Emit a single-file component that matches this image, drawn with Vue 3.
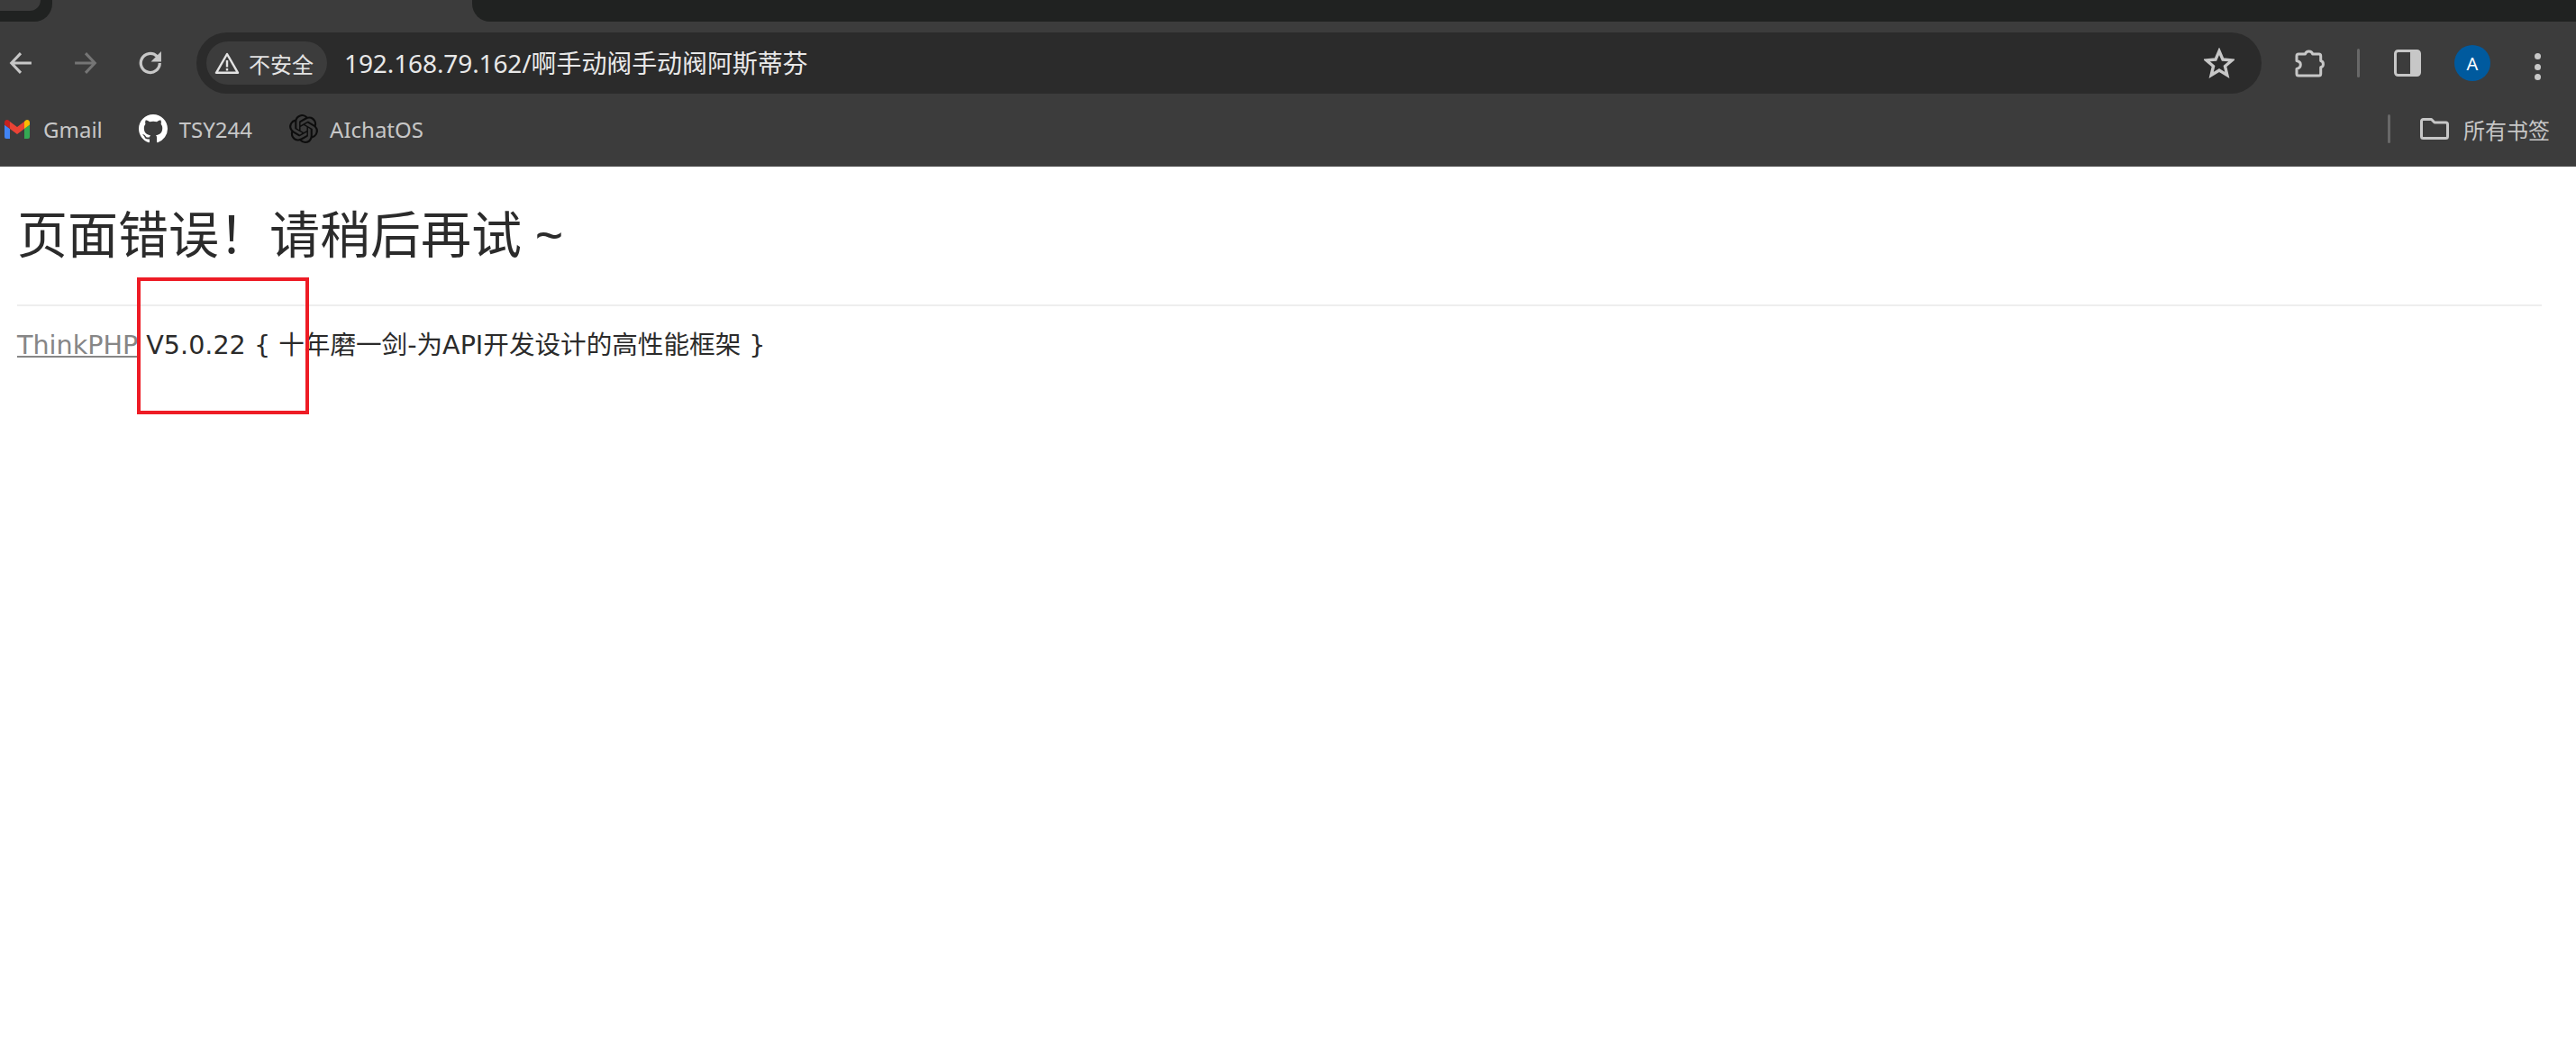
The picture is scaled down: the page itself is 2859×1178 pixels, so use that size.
<script setup>
const bookmarks = [
  { name: 'Gmail', icon: 'gmail' },
  { name: 'TSY244', icon: 'github' },
  { name: 'AIchatOS', icon: 'openai' }
]
</script>

<template>
  <div class="page">
    <header class="chrome">
      <div class="tabstrip">
        <div class="tab-left"><div class="tab-left-inner"></div></div>
        <div class="tab-active"></div>
        <div class="tab-right"></div>
      </div>
      <div class="toolbar">
        <svg class="nav first" viewBox="0 0 24 24" fill="none" stroke="#c7c7c7" stroke-width="2.8"><path d="M23 12H3M12 2 2.500 12 12 22" /></svg>
        <svg class="nav forward" viewBox="0 0 24 24" fill="none" stroke="#757575" stroke-width="2.8"><path d="M1 12h20M12 2l9.500 10L12 22" /></svg>
        <svg class="nav reload" viewBox="0 0 24 24" fill="none" stroke="#c7c7c7" stroke-width="3"><path d="M21.500 12a9.700 9.700 0 1 1-3-7L21.500 8" /><path d="M23 0v10.500h-10.500z" stroke="none" fill="#c7c7c7" /></svg>
        <div class="omnibox">
          <div class="chip">
            <svg class="warn" viewBox="0 0 28 24" fill="none" stroke="#e3e3e3" stroke-width="2.400"><path d="M14 2 2 22.800h24z" stroke-linejoin="round" /><path d="M14 9v7.500M14 18v2.500" /></svg>
            <span>不安全</span>
          </div>
          <div class="url">192.168.79.162/啊手动阀手动阀阿斯蒂芬</div>
          <svg class="star" viewBox="0 0 32 32" fill="none" stroke="#c7c7c7" stroke-width="3.200"><path d="m16 3.500 3.800 8.800 9.500.8-7.200 6.200 2.200 9.300-8.300-5-8.300 5 2.200-9.300-7.200-6.200 9.500-.8z" stroke-linejoin="miter" /></svg>
        </div>
        <svg class="puzzle" viewBox="0 0 34 34" fill="none" stroke="#c7c7c7" stroke-width="3"><path d="M4 8h7.500a4.300 4.300 0 0 1 8.200 0h7c1.200 0 2 .8 2 2v5.500a3.800 3.800 0 0 1 0 7.300V30c0 1.200-.8 2-2 2H4c-1.200 0-2-.8-2-2v-5.500c2.800-.6 4.300-2.600 4.300-4.700S4.800 16 2 15.500V10c0-1.200.8-2 2-2z" stroke-linejoin="round" /></svg>
        <i class="divider"></i>
        <svg class="panel" viewBox="0 0 30 30"><rect x="1.500" y="1.500" width="27" height="27" rx="3" fill="none" stroke="#c7c7c7" stroke-width="3" /><path d="M18 1.500h8a3 3 0 0 1 2.500 3v21a3 3 0 0 1-2.500 3h-8z" fill="#c7c7c7" /></svg>
        <div class="avatar">A</div>
        <div class="kebab"><i></i><i></i><i></i></div>
      </div>
      <div class="bookmarks">
        <div v-for="b in bookmarks" :key="b.name" class="bookmark" :class="b.icon">
          <svg v-if="b.icon === 'gmail'" class="bm-icon" viewBox="0 0 28 21">
            <path d="M2 21h4V10L0 5.500V19a2 2 0 0 0 2 2z" fill="#4285f4" />
            <path d="M22 21h4a2 2 0 0 0 2-2V5.500L22 10z" fill="#34a853" />
            <path d="M22 2v8l6-4.500V3C28 .6 25.200-.8 23.200.8z" fill="#fbbc04" />
            <path d="M6 10V2l8 6 8-6v8l-8 6z" fill="#ea4335" />
            <path d="M0 3v2.500L6 10V2L4.800.8C2.800-.8 0 .6 0 3z" fill="#c5221f" />
          </svg>
          <svg v-else-if="b.icon === 'github'" class="bm-icon" viewBox="0 0 16 16"><path fill="#fff" d="M8 0C3.580 0 0 3.580 0 8c0 3.540 2.290 6.530 5.470 7.590.4.070.55-.17.55-.38 0-.19-.01-.82-.01-1.490-2.010.37-2.530-.49-2.690-.94-.09-.23-.48-.94-.82-1.130-.28-.15-.68-.52-.01-.53.63-.01 1.080.58 1.230.82.720 1.210 1.870.87 2.330.66.070-.52.28-.87.51-1.070-1.780-.2-3.640-.89-3.640-3.950 0-.87.31-1.590.82-2.150-.08-.2-.36-1.020.08-2.120 0 0 .67-.21 2.200.82.64-.18 1.320-.27 2-.27.68 0 1.360.09 2 .27 1.530-1.040 2.200-.82 2.200-.82.44 1.100.16 1.920.08 2.120.51.56.82 1.270.82 2.150 0 3.070-1.870 3.750-3.650 3.950.29.25.54.73.54 1.480 0 1.070-.01 1.930-.01 2.200 0 .21.15.46.55.38A8.013 8.013 0 0 0 16 8c0-4.420-3.580-8-8-8z" /></svg>
          <svg v-else class="bm-icon" viewBox="0 0 24 24"><path fill="#0d0d0d" d="M22.2819 9.8211a5.9847 5.9847 0 0 0-.5157-4.9108 6.0462 6.0462 0 0 0-6.5098-2.9A6.0651 6.0651 0 0 0 4.9807 4.1818a5.9847 5.9847 0 0 0-3.9977 2.9 6.0462 6.0462 0 0 0 .7427 7.0966 5.98 5.98 0 0 0 .511 4.9107 6.051 6.051 0 0 0 6.5146 2.9001A5.9847 5.9847 0 0 0 13.2599 24a6.0557 6.0557 0 0 0 5.7718-4.2058 5.9894 5.9894 0 0 0 3.9977-2.9001 6.0557 6.0557 0 0 0-.7475-7.0729zm-9.022 12.6081a4.4755 4.4755 0 0 1-2.8764-1.0408l.1419-.0804 4.7783-2.7582a.7948.7948 0 0 0 .3927-.6813v-6.7369l2.02 1.1686a.071.071 0 0 1 .038.052v5.5826a4.504 4.504 0 0 1-4.4945 4.4944zm-9.6607-4.1254a4.4708 4.4708 0 0 1-.5346-3.0137l.142.0852 4.783 2.7582a.7712.7712 0 0 0 .7806 0l5.8428-3.3685v2.3324a.0804.0804 0 0 1-.0332.0615L9.74 19.9502a4.4992 4.4992 0 0 1-6.1408-1.6464zM2.3408 7.8956a4.485 4.485 0 0 1 2.3655-1.9728V11.6a.7664.7664 0 0 0 .3879.6765l5.8144 3.3543-2.0201 1.1685a.0757.0757 0 0 1-.071 0l-4.8303-2.7865A4.504 4.504 0 0 1 2.3408 7.872zm16.5963 3.8558L13.1038 8.364 15.1192 7.2a.0757.0757 0 0 1 .071 0l4.8303 2.7913a4.4944 4.4944 0 0 1-.6765 8.1042v-5.6772a.79.79 0 0 0-.407-.667zm2.0107-3.0231l-.142-.0852-4.7735-2.7818a.7759.7759 0 0 0-.7854 0L9.409 9.2297V6.8974a.0662.0662 0 0 1 .0284-.0615l4.8303-2.7866a4.4992 4.4992 0 0 1 6.6802 4.66zM8.3065 12.863l-2.02-1.1638a.0804.0804 0 0 1-.038-.0567V6.0742a4.4992 4.4992 0 0 1 7.3757-3.4537l-.142.0805L8.704 5.459a.7948.7948 0 0 0-.3927.6813zm1.0976-2.3654l2.602-1.4998 2.6069 1.4998v2.9994l-2.5974 1.4997-2.6067-1.4997Z" /></svg>
          <span>{{ b.name }}</span>
        </div>
        <div class="bm-right">
          <i class="divider"></i>
          <svg class="folder" viewBox="0 0 32 24" fill="none" stroke="#c7c7c7" stroke-width="3"><path d="M3.500 1.500h9l3.500 3.500h12.500a2 2 0 0 1 2 2v13.500a2 2 0 0 1-2 2H3.500a2 2 0 0 1-2-2v-17a2 2 0 0 1 2-2z" stroke-linejoin="round" /></svg>
          <span>所有书签</span>
        </div>
      </div>
    </header>
    <main class="content">
      <h1>页面错误&#xFF01;请稍后再试 ~</h1>
      <div class="copyright">
        <a href="#">ThinkPHP</a> <span>V5.0.22</span> <span>{ 十年磨一剑-为API开发设计的高性能框架 }</span>
      </div>
      <div class="annotation"></div>
    </main>
  </div>
</template>

<style scoped>
.page {
  width: 2859px;
  height: 1178px;
  overflow: hidden;
  background: #fff;
  font-family: "Noto Sans", "Noto Sans CJK SC", sans-serif;
  display: flex;
  flex-direction: column;
}
.chrome {
  background: #202221;
  height: 185px;
  flex: none;
  display: flex;
  flex-direction: column;
}
.tabstrip {
  height: 24px;
  display: flex;
  background: #3c3c3c;
}
.tab-left {
  width: 58px;
  background: #202221;
  border-bottom-right-radius: 20px;
}
.tab-left-inner {
  width: 45px;
  height: 12px;
  background: #3c3c3c;
  border-bottom-right-radius: 12px;
}
.tab-active {
  flex: 0 0 466px;
}
.tab-right {
  flex: 1;
  background: #202221;
  border-bottom-left-radius: 20px;
}
.toolbar {
  height: 92px;
  background: #3c3c3c;
  display: flex;
  align-items: flex-start;
  padding-top: 12px;
  box-sizing: border-box;
  position: relative;
}
.nav {
  width: 26px;
  height: 26px;
  margin-top: 21px;
  flex: none;
}
.first { margin-left: 10px; }
.forward { margin-left: 46px; }
.reload { margin-left: 46px; }
.omnibox {
  margin-left: 38px;
  width: 2292px;
  height: 68px;
  background: #2b2b2b;
  border-radius: 34px;
  display: flex;
  align-items: center;
  flex: none;
  padding: 0 10px 0 11px;
  box-sizing: border-box;
}
.chip {
  width: 134px;
  height: 48px;
  background: #3c3c3c;
  border-radius: 24px;
  display: flex;
  align-items: center;
  padding-left: 9px;
  box-sizing: border-box;
  color: #e3e3e3;
  font-size: 24px;
  flex: none;
}
.warn {
  width: 28px;
  height: 24px;
  margin-right: 10px;
  flex: none;
}
.url {
  margin: -3px 0 0 19px;
  color: #e8e8e8;
  font-size: 28px;
  letter-spacing: -0.1px;
  flex: 1;
  white-space: nowrap;
}
.star {
  width: 34px;
  height: 34px;
  margin-right: 20px;
  flex: none;
}
.puzzle {
  width: 34px;
  height: 34px;
  margin: 16px 0 0 37px;
  flex: none;
}
.divider {
  display: block;
  width: 3px;
  height: 32px;
  background: #686868;
  border-radius: 2px;
  flex: none;
}
.toolbar .divider {
  margin: 18px 0 0 35px;
}
.panel {
  width: 30px;
  height: 30px;
  margin: 19px 0 0 38px;
  flex: none;
}
.avatar {
  width: 40px;
  height: 40px;
  margin: 14px 0 0 37px;
  border-radius: 50%;
  background: #005a9e;
  color: #fff;
  font-size: 20px;
  display: flex;
  align-items: center;
  justify-content: center;
  flex: none;
}
.kebab {
  margin: 23px 0 0 49px;
  display: flex;
  flex-direction: column;
  gap: 4.500px;
  flex: none;
}
.kebab i {
  display: block;
  width: 7px;
  height: 7px;
  border-radius: 50%;
  background: #c7c7c7;
}
.bookmarks {
  height: 69px;
  background: #3c3c3c;
  border-bottom: 1px solid #4a4a4a;
  box-sizing: border-box;
  display: flex;
  align-items: center;
  color: #c7c7c7;
  font-size: 24px;
  padding: 0 0 14px 5px;
}
.bookmark {
  display: flex;
  align-items: center;
  flex: none;
}
.bm-icon {
  display: block;
  flex: none;
}
.gmail .bm-icon {
  width: 28px;
  height: 21px;
  margin-right: 15px;
}
.github {
  margin-left: 40px;
}
.github .bm-icon {
  width: 32px;
  height: 32px;
  margin-right: 13px;
}
.openai {
  margin-left: 41px;
}
.openai .bm-icon {
  width: 32px;
  height: 32px;
  margin-right: 13px;
}
.bm-right {
  margin-left: auto;
  display: flex;
  align-items: center;
  padding-right: 29px;
}
.folder {
  width: 32px;
  height: 24px;
  margin: 0 16px 0 33px;
}
.content {
  position: relative;
  flex: 1;
  padding: 0 38px 0 19px;
  color: #2b2b2b;
}
h1 {
  margin: 0;
  padding: 36px 0 41px;
  font-size: 56px;
  line-height: 76px;
  font-weight: 400;
  border-bottom: 2px solid #eee;
}
.copyright {
  margin-top: 24px;
  font-size: 28.600px;
  line-height: 38px;
  font-family: "DejaVu Sans", "Noto Sans CJK SC", sans-serif;
  font-weight: 400;
}
.copyright a {
  color: #868686;
  text-decoration: underline;
}
.annotation {
  position: absolute;
  left: 152px;
  top: 123px;
  width: 191px;
  height: 152px;
  border: 4px solid #ee1c25;
  box-sizing: border-box;
}
</style>
